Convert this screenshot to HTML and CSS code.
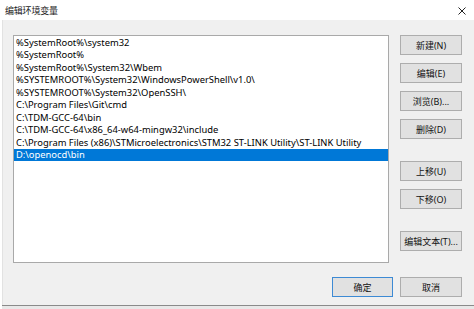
FILE: index.html
```html
<!DOCTYPE html>
<html lang="zh-CN">
<head>
<meta charset="utf-8">
<title>编辑环境变量</title>
<link rel="stylesheet" href="styles.css">
</head>
<body>
<div class="window">
  <div class="titlebar">
    <span class="title">编辑环境变量</span>
    <svg class="close" width="10" height="10" viewBox="0 0 10 10"><path d="M1.5 1.5 L8.5 8.5 M8.5 1.5 L1.5 8.5" stroke="#222" stroke-width="1" fill="none"/></svg>
  </div>
  <div class="body">
    <div class="main">
      <div class="list">
        <div class="row">%SystemRoot%\system32</div>
        <div class="row">%SystemRoot%</div>
        <div class="row">%SystemRoot%\System32\Wbem</div>
        <div class="row">%SYSTEMROOT%\System32\WindowsPowerShell\v1.0\</div>
        <div class="row">%SYSTEMROOT%\System32\OpenSSH\</div>
        <div class="row">C:\Program Files\Git\cmd</div>
        <div class="row">C:\TDM-GCC-64\bin</div>
        <div class="row">C:\TDM-GCC-64\x86_64-w64-mingw32\include</div>
        <div class="row">C:\Program Files (x86)\STMicroelectronics\STM32 ST-LINK Utility\ST-LINK Utility</div>
        <div class="row selected">D:\openocd\bin</div>
      </div>
      <div class="side">
        <div class="group">
          <button class="btn">新建(N)</button>
          <button class="btn">编辑(E)</button>
          <button class="btn">浏览(B)...</button>
          <button class="btn">删除(D)</button>
        </div>
        <div class="group">
          <button class="btn">上移(U)</button>
          <button class="btn">下移(O)</button>
        </div>
        <div class="group">
          <button class="btn">编辑文本(T)...</button>
        </div>
      </div>
    </div>
    <div class="footer">
      <button class="btn default">确定</button>
      <button class="btn">取消</button>
    </div>
  </div>
  <div class="bottomedge"></div>
</div>
</body>
</html>
```

FILE: styles.css
```css
html, body {
  margin: 0;
  padding: 0;
  background: #ffffff;
}
.window {
  width: 474px;
  height: 309px;
  display: flex;
  flex-direction: column;
  font-family: "Noto Sans", "Noto Sans CJK SC", sans-serif;
  color: #000;
  overflow: hidden;
}
.titlebar {
  height: 20px;
  background: #ffffff;
  display: flex;
  align-items: center;
  justify-content: space-between;
  padding: 0 7px 0 5px;
  box-sizing: border-box;
}
.title {
  font-family: "Noto Sans CJK SC", sans-serif;
  font-size: 9px;
  color: #1a1a1a;
  letter-spacing: -0.2px;
}
.close {
  display: block;
  margin-top: 1px;
}
.body {
  flex: 1;
  background: #f0f0f0;
  border-left: 1px solid #e2e2e2;
  margin-left: 2px;
  display: flex;
  flex-direction: column;
  padding: 15px 0 0 10px;
}
.main {
  display: flex;
  gap: 11px;
}
.list {
  width: 374px;
  height: 225px;
  background: #ffffff;
  border: 1px solid #a9a9a9;
  padding-top: 1px;
  box-sizing: content-box;
  overflow: hidden;
}
.row {
  height: 12.45px;
  line-height: 12.45px;
  font-size: 9.4px;
  padding-left: 2px;
  white-space: nowrap;
  color: #000;
}
.row.selected {
  background: #0078d7;
  color: #ffffff;
}
.side {
  display: flex;
  flex-direction: column;
  gap: 22px;
}
.group {
  display: flex;
  flex-direction: column;
  gap: 8px;
}
.btn {
  width: 62px;
  height: 20px;
  margin: 0;
  padding: 0;
  background: #e1e1e1;
  border: 1px solid #adadad;
  font-family: "Noto Sans", "Noto Sans CJK SC", sans-serif;
  font-size: 9px;
  color: #111;
  box-sizing: border-box;
}
.footer {
  display: flex;
  justify-content: flex-end;
  gap: 7px;
  padding: 14px 12px 0 0;
}
.btn.default {
  width: 61px;
  border-color: #3d8ad4;
}
.bottomedge {
  height: 3px;
  background: #e8e8e8;
  border-top: 1px solid #8a8a8a;
  margin-left: 2px;
}
```
